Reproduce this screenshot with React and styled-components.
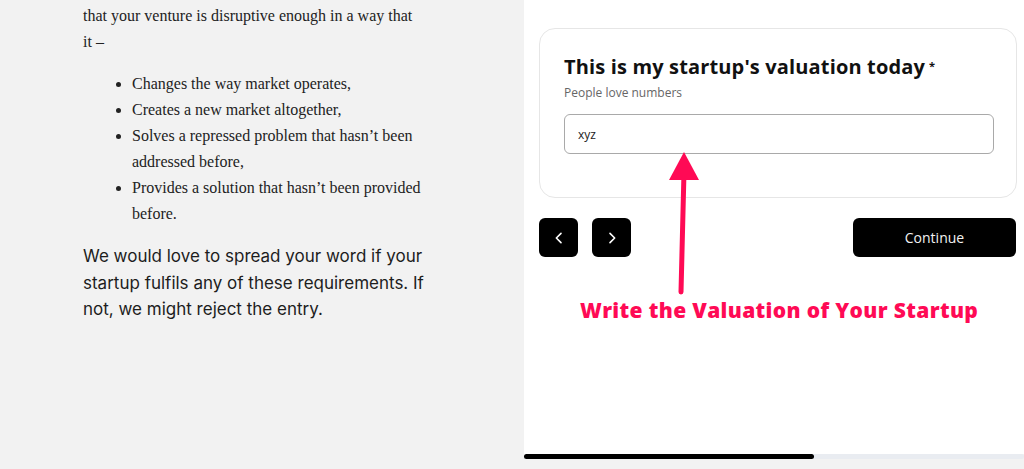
import React from "react";
import styled, { createGlobalStyle } from "styled-components";

const GlobalStyle = createGlobalStyle`
  html, body {
    margin: 0;
    padding: 0;
    background: #f2f2f2;
    overflow: hidden;
  }
`;

const Page = styled.div`
  display: grid;
  grid-template-columns: 524px 500px;
  width: 1024px;
  height: 469px;
`;

const Article = styled.div`
  padding: 3px 0 0 83px;
  width: 352px;
  color: #222;
`;

const SerifText = styled.p`
  max-width: 340px;
  font-family: "Liberation Serif", "Times New Roman", serif;
  font-size: 16px;
  line-height: 26px;
  margin: 0 0 16px;
`;

const List = styled.ul`
  max-width: 291px;
  font-family: "Liberation Serif", "Times New Roman", serif;
  font-size: 16px;
  line-height: 26px;
  margin: 0 0 16px;
  padding-left: 49px;
`;

const SansText = styled.p`
  font-family: Inter, "Noto Sans", sans-serif;
  font-size: 17px;
  line-height: 26.5px;
  margin: 0;
  color: #1d1d1d;
`;

const Side = styled.div`
  display: flex;
  flex-direction: column;
`;

const Panel = styled.div`
  position: relative;
  background: #fff;
  height: 454px;
  padding: 28px 7px 0 15px;
  box-sizing: border-box;
`;

const Card = styled.div`
  border: 1px solid #e6e6e6;
  border-radius: 16px;
  height: 170px;
  box-sizing: border-box;
  padding: 24px 23px 0 24px;
`;

const Title = styled.h2`
  margin: 0;
  font-family: "Open Sans", sans-serif;
  font-weight: 700;
  font-size: 20px;
  letter-spacing: 0.15px;
  color: #111;
  sup {
    font-size: 11px;
    margin-left: 4px;
    vertical-align: 4px;
  }
`;

const Hint = styled.div`
  margin-top: 4px;
  font-family: "Open Sans", sans-serif;
  font-size: 12px;
  color: #666;
`;

const Field = styled.input`
  display: block;
  margin-top: 13px;
  width: 430px;
  height: 40px;
  box-sizing: border-box;
  border: 1px solid #a9a9a9;
  border-radius: 6px;
  padding: 0 13px;
  font-family: "Open Sans", sans-serif;
  font-size: 12px;
  color: #222;
  outline: none;
`;

const NavRow = styled.div`
  display: flex;
  align-items: center;
  gap: 14px;
  margin-top: 20px;
`;

const IconButton = styled.button`
  width: 39px;
  height: 39px;
  border: none;
  border-radius: 6px;
  background: #000;
  color: #fff;
  display: flex;
  align-items: center;
  justify-content: center;
  padding: 0;
`;

const ContinueButton = styled.button`
  margin-left: auto;
  margin-right: 1px;
  width: 163px;
  height: 39px;
  border: none;
  border-radius: 6px;
  background: #000;
  color: #f2f2f2;
  font-family: "Open Sans", sans-serif;
  font-size: 14px;
  font-weight: 500;
`;

const Pointer = styled.svg`
  position: absolute;
  left: 140px;
  top: 150px;
`;

const Note = styled.div`
  position: absolute;
  left: 56px;
  top: 296px;
  font-family: "Open Sans", sans-serif;
  font-weight: 800;
  font-size: 21px;
  letter-spacing: 0.35px;
  color: #ff0a55;
  white-space: nowrap;
`;

const Track = styled.div`
  height: 5px;
  background: #e9ecf1;
  border-radius: 3px;
`;

const Fill = styled.div`
  height: 100%;
  background: #000;
  border-radius: 3px;
`;

const Chevron = ({ dir }) => (
  <svg width="16" height="16" viewBox="0 0 24 24" fill="none" stroke="currentColor" strokeWidth="2.4" strokeLinecap="round" strokeLinejoin="round">
    <path d={dir === "left" ? "M15 5l-7 7 7 7" : "M9 5l7 7-7 7"} />
  </svg>
);

export default function App() {
  const progress = 58;
  return (
    <>
      <GlobalStyle />
      <Page>
        <Article>
          <SerifText>that your venture is disruptive enough in a way that it –</SerifText>
          <List>
            <li>Changes the way market operates,</li>
            <li>Creates a new market altogether,</li>
            <li>Solves a repressed problem that hasn’t been addressed before,</li>
            <li>Provides a solution that hasn’t been provided before.</li>
          </List>
          <SansText>We would love to spread your word if your startup fulfils any of these requirements. If not, we might reject the entry.</SansText>
        </Article>
        <Side>
          <Panel>
            <Card>
              <Title>This is my startup's valuation today<sup>*</sup></Title>
              <Hint>People love numbers</Hint>
              <Field defaultValue="xyz" />
            </Card>
            <NavRow>
              <IconButton><Chevron dir="left" /></IconButton>
              <IconButton><Chevron dir="right" /></IconButton>
              <ContinueButton>Continue</ContinueButton>
            </NavRow>
            <Pointer width="40" height="146" viewBox="0 0 40 146">
              <path d="M17 142 L20 22" stroke="#ff0a55" strokeWidth="5" strokeLinecap="round" />
              <path d="M20 2 L35 30 L5 30 Z" fill="#ff0a55" />
            </Pointer>
            <Note>Write the Valuation of Your Startup</Note>
          </Panel>
          <Track>
            <Fill style={{ width: `${progress}%` }} />
          </Track>
        </Side>
      </Page>
    </>
  );
}
